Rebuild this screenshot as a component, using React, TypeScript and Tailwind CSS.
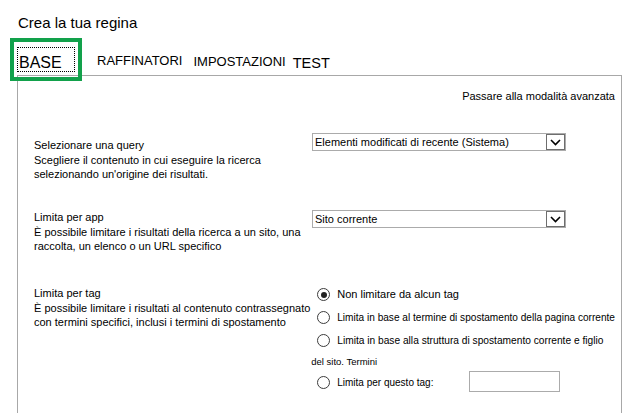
import React from "react";

function Chevron() {
  return (
    <svg width="11" height="7" viewBox="0 0 11 7" fill="none">
      <polyline points="1,1 5.5,5.5 10,1" stroke="#000" strokeWidth="1.6" />
    </svg>
  );
}

function Select({ value }: { value: string }) {
  return (
    <div className="flex h-[18px] w-[254px] items-stretch border border-[#ababab] bg-white">
      <div className="flex-1 truncate pl-[2px] text-[11px] leading-[16px]">{value}</div>
      <div className="flex w-[19px] items-center justify-center border border-[#6e6e6e] bg-white">
        <Chevron />
      </div>
    </div>
  );
}

function Radio({ checked = false }: { checked?: boolean }) {
  return (
    <span className="flex h-[13px] w-[13px] shrink-0 items-center justify-center rounded-full border border-[#3c3c3c] bg-white">
      {checked && <span className="h-[6px] w-[6px] rounded-full bg-[#222]" />}
    </span>
  );
}

export default function App() {
  return (
    <div className="relative h-[413px] w-[627px] overflow-hidden bg-white font-['Liberation_Sans',Arial,sans-serif] text-black">
      <div className="pl-[18px] pt-[14px] text-[15px] leading-[18px]">Crea la tua regina</div>

      {/* tabs */}
      <div className="flex h-[43px] items-end pl-[17px]">
        <div className="mb-[3px] flex h-[25px] w-[58px] items-end border border-dotted border-black pl-[1px] text-[16px] leading-none">
          BASE
        </div>
        <div className="mb-[8px] ml-[22px] text-[13px] leading-none">RAFFINATORI</div>
        <div className="mb-[7px] ml-[11px] text-[13px] leading-none">IMPOSTAZIONI</div>
        <div className="mb-[5px] ml-[7px] text-[14.5px] leading-none">TEST</div>
      </div>

      {/* highlight around active tab */}
      <div className="absolute left-[10px] top-[38px] h-[43px] w-[72px] border-4 border-[#12a14b]" />

      {/* panel */}
      <div className="ml-[17px] h-[400px] w-[605px] border-l border-r border-t border-[#a8a8a8] pl-[16px] pr-[6px]">
        <div className="pt-[13px] text-right text-[11px] leading-[14px]">Passare alla modalità avanzata</div>

        <div className="mt-[30px] flex items-start">
          <div className="w-[278px] pt-[5px] text-[11px] leading-[14.5px]">
            <div>Selezionare una query</div>
            <div>Scegliere il contenuto in cui eseguire la ricerca selezionando un'origine dei risultati.</div>
          </div>
          <Select value="Elementi modificati di recente (Sistema)" />
        </div>

        <div className="mt-[28.5px] flex items-start">
          <div className="w-[278px] text-[11px] leading-[14.5px]">
            <div>Limita per app</div>
            <div>È possibile limitare i risultati della ricerca a un sito, una raccolta, un elenco o un URL specifico</div>
          </div>
          <Select value="Sito corrente" />
        </div>

        <div className="mt-[29.5px] flex items-start">
          <div className="w-[278px] pt-[3px] text-[11px] leading-[14.5px]">
            <div>Limita per tag</div>
            <div>È possibile limitare i risultati al contenuto contrassegnato con termini specifici, inclusi i termini di spostamento</div>
          </div>
          <div className="flex flex-col">
            <div className="flex h-[23px] items-center pl-[6px]">
              <Radio checked />
              <span className="ml-[7px] text-[11px]">Non limitare da alcun tag</span>
            </div>
            <div className="flex h-[23px] items-center pl-[6px]">
              <Radio />
              <span className="ml-[7px] whitespace-nowrap text-[10.1px]">
                Limita in base al termine di spostamento della pagina corrente
              </span>
            </div>
            <div className="flex h-[23px] items-center pl-[6px]">
              <Radio />
              <span className="ml-[7px] whitespace-nowrap text-[10.2px]">
                Limita in base alla struttura di spostamento corrente e figlio
              </span>
            </div>
            <div className="h-[19px] pt-[4px] text-[9.5px] leading-[12px]">del sito. Termini</div>
            <div className="flex items-start pl-[6px]">
              <div className="mt-[5px] flex h-[13px] w-[152px] items-center">
                <Radio />
                <span className="ml-[7px] whitespace-nowrap text-[10px]">Limita per questo tag:</span>
              </div>
              <div className="h-[21px] w-[91px] border border-[#ababab] bg-white" />
            </div>
          </div>
        </div>
      </div>
    </div>
  );
}
